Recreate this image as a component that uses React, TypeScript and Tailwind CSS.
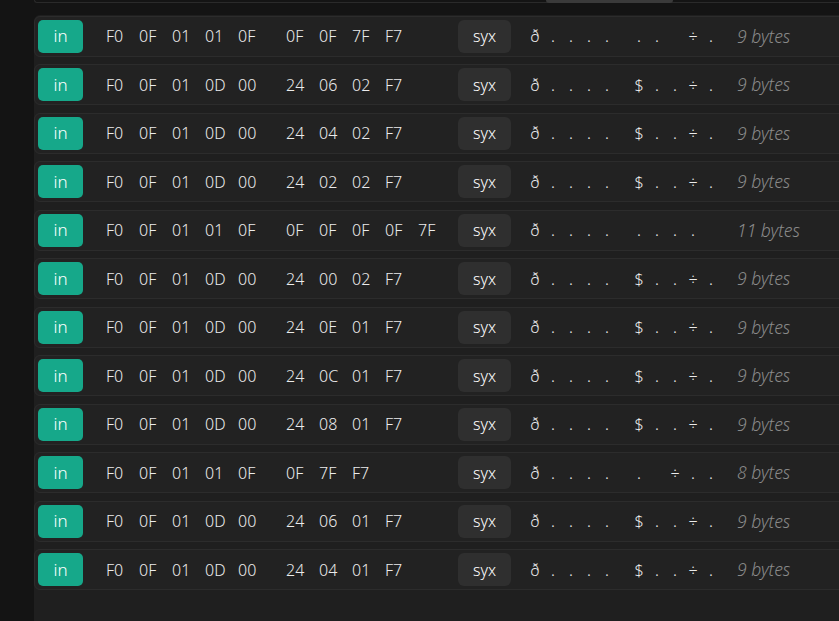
import React from 'react';

interface Message {
  hexA: string[];
  hexB: string[];
  asciiA: string[];
  asciiB: string[];
  size: number;
}

const sysex = (b: string[], ascii: string[]): Message => ({
  hexA: ['F0', '0F', '01', '0D', '00'],
  hexB: b,
  asciiA: ['ð', '.', '.', '.', '.'],
  asciiB: ascii,
  size: 9,
});

const dollar = ['$', '.', '.', '÷', '.'];

const messages: Message[] = [
  {
    hexA: ['F0', '0F', '01', '01', '0F'],
    hexB: ['0F', '0F', '7F', 'F7'],
    asciiA: ['ð', '.', '.', '.', '.'],
    asciiB: ['.', '.', '', '÷', '.'],
    size: 9,
  },
  sysex(['24', '06', '02', 'F7'], dollar),
  sysex(['24', '04', '02', 'F7'], dollar),
  sysex(['24', '02', '02', 'F7'], dollar),
  {
    hexA: ['F0', '0F', '01', '01', '0F'],
    hexB: ['0F', '0F', '0F', '0F', '7F'],
    asciiA: ['ð', '.', '.', '.', '.'],
    asciiB: ['.', '.', '.', '.', ''],
    size: 11,
  },
  sysex(['24', '00', '02', 'F7'], dollar),
  sysex(['24', '0E', '01', 'F7'], dollar),
  sysex(['24', '0C', '01', 'F7'], dollar),
  sysex(['24', '08', '01', 'F7'], dollar),
  {
    hexA: ['F0', '0F', '01', '01', '0F'],
    hexB: ['0F', '7F', 'F7'],
    asciiA: ['ð', '.', '.', '.', '.'],
    asciiB: ['.', '', '÷', '.', '.'],
    size: 8,
  },
  sysex(['24', '06', '01', 'F7'], dollar),
  sysex(['24', '04', '01', 'F7'], dollar),
];

const MessageRow = ({ msg }: { msg: Message }) => {
  return (
    <div className="flex items-center h-[41px] w-[900px] shrink-0 px-[3px] bg-[#222222] border border-[#2c2c2c] rounded-md">
      <div className="flex items-center justify-center w-[45px] h-[33px] rounded-[5px] bg-[#16a88a] text-[17px] text-white">
        in
      </div>

      <div className="flex ml-[23px] text-[16px] text-[#ececec]">
        {msg.hexA.map((b, i) => (
          <span key={i} className="w-[33px]">{b}</span>
        ))}
      </div>
      <div className="flex ml-[15px] w-[172px] text-[16px] text-[#ececec]">
        {msg.hexB.map((b, i) => (
          <span key={i} className="w-[33px]">{b}</span>
        ))}
      </div>

      <div className="flex items-center justify-center w-[53px] h-[33px] rounded-md bg-[#2f2f2f] text-[16px] text-white">
        syx
      </div>

      <div className="flex ml-[15px] text-[16px] text-[#ececec]">
        {msg.asciiA.map((c, i) => (
          <span key={i} className="w-[18px] text-center">{c}</span>
        ))}
      </div>
      <div className="flex ml-[14px] text-[16px] text-[#ececec]">
        {msg.asciiB.map((c, i) => (
          <span key={i} className="w-[18px] text-center">{c}</span>
        ))}
      </div>

      <span className="ml-[17px] text-[17.5px] italic text-[#8a8a8a]">{msg.size} bytes</span>
    </div>
  );
};

export default function App() {
  return (
    <div
      className="flex w-[839px] h-[621px] overflow-hidden bg-[#141414] font-light"
      style={{ fontFamily: '"Noto Sans", "Open Sans", sans-serif' }}
    >
      <div className="w-[34px] shrink-0" />
      <div className="flex flex-col flex-1 min-w-0">
        <div className="relative h-[3px] shrink-0 border-b border-l border-[#2a2a2a] rounded-bl-md">
          <div className="absolute left-[511px] top-0 w-[127px] h-[3px] bg-[#3a3a3a] rounded-b-sm" />
        </div>
        <div className="h-[12px] shrink-0" />
        <div className="flex flex-col flex-1 gap-[7.5px] pt-[0.5px] bg-[#1f1f1f] rounded-tl-md">
          {messages.map((m, i) => (
            <MessageRow key={i} msg={m} />
          ))}
        </div>
      </div>
    </div>
  );
}
